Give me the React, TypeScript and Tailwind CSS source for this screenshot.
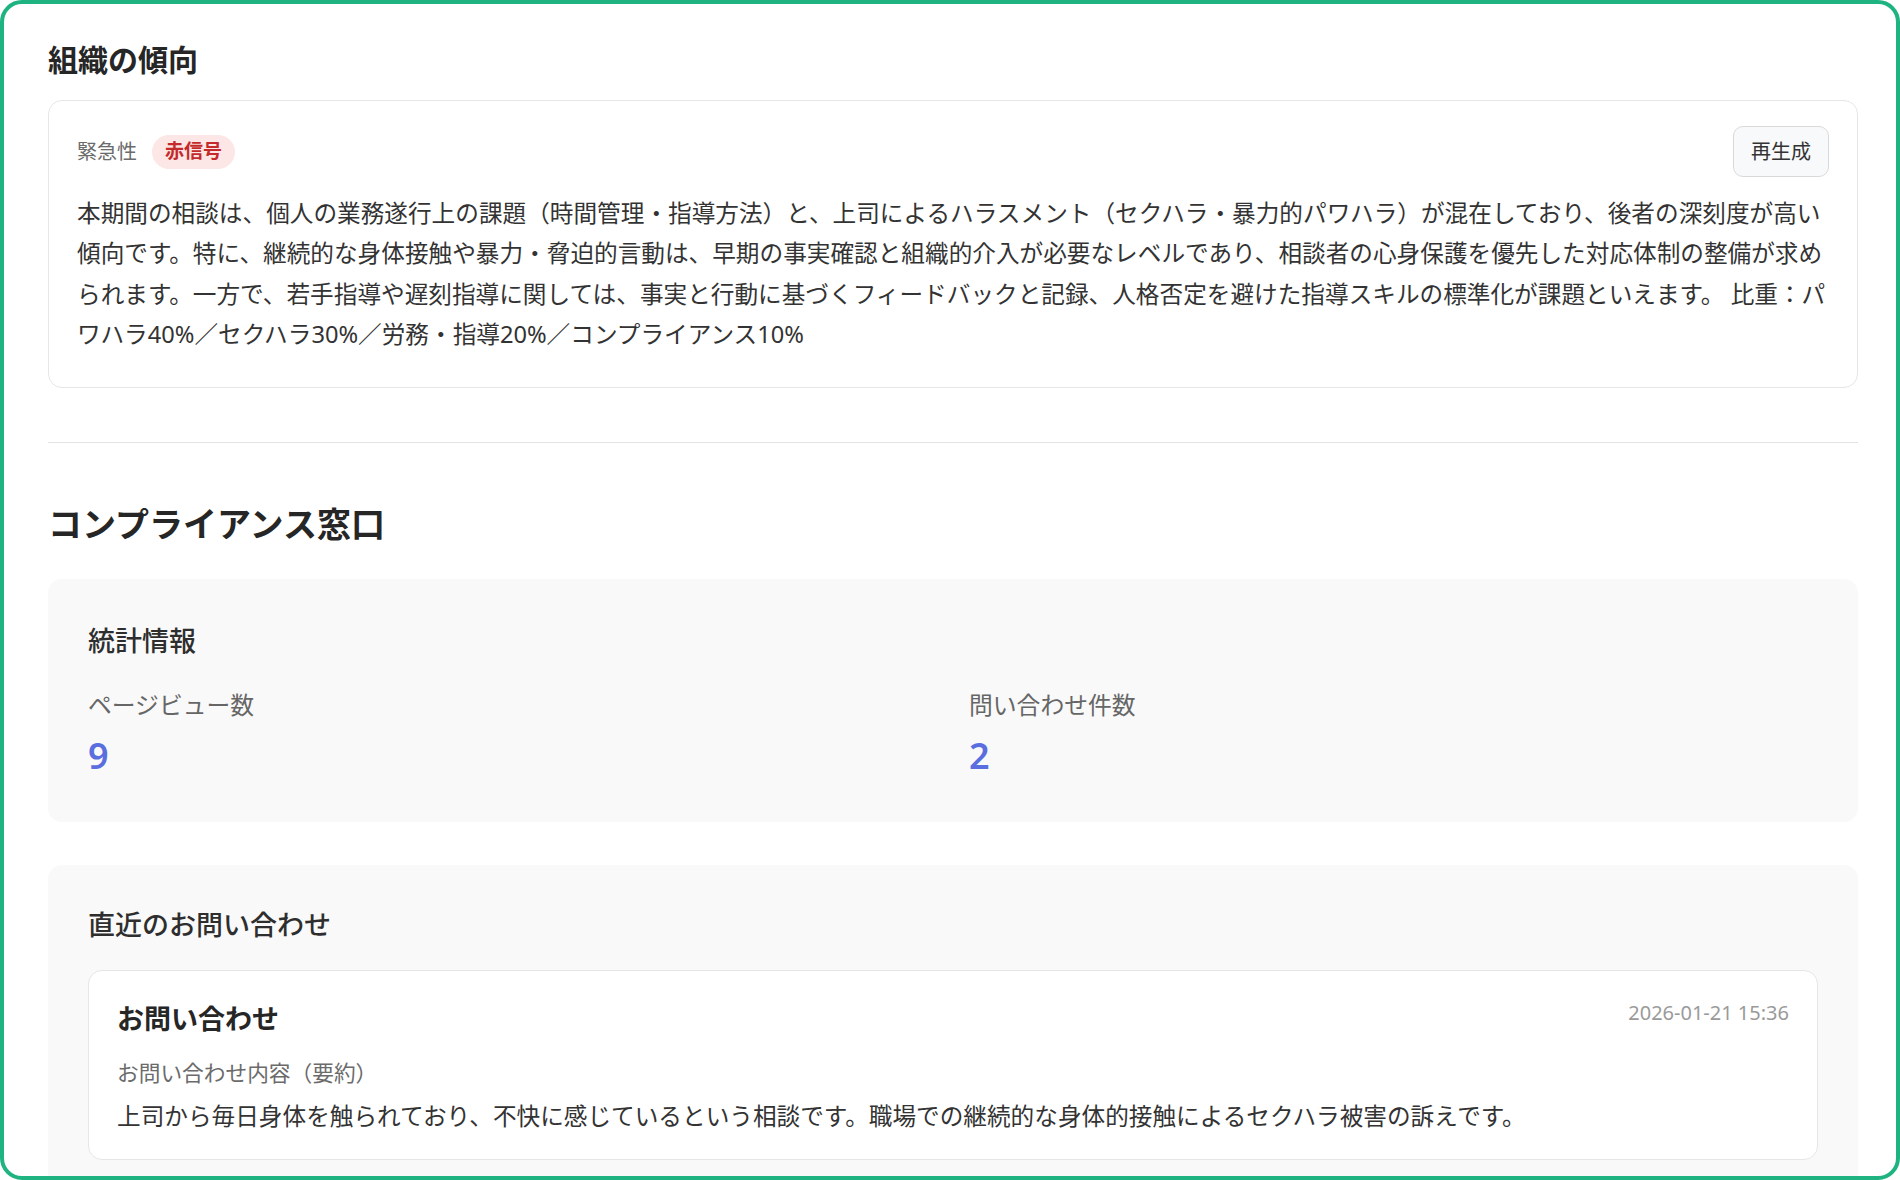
import React from "react";

const font = '"Noto Sans", "Noto Sans CJK JP", sans-serif';

const summary =
  "本期間の相談は、個人の業務遂行上の課題（時間管理・指導方法）と、上司によるハラスメント（セクハラ・暴力的パワハラ）が混在しており、後者の深刻度が高い傾向です。特に、継続的な身体接触や暴力・脅迫的言動は、早期の事実確認と組織的介入が必要なレベルであり、相談者の心身保護を優先した対応体制の整備が求められます。一方で、若手指導や遅刻指導に関しては、事実と行動に基づくフィードバックと記録、人格否定を避けた指導スキルの標準化が課題といえます。 比重：パワハラ40%／セクハラ30%／労務・指導20%／コンプライアンス10%";

const stats = [
  { label: "ページビュー数", value: 9 },
  { label: "問い合わせ件数", value: 2 },
];

const inquiries = [
  {
    id: "1",
    title: "お問い合わせ",
    date: "2026-01-21 15:36",
    body: "上司から毎日身体を触られており、不快に感じているという相談です。職場での継続的な身体的接触によるセクハラ被害の訴えです。",
  },
];

export default function App() {
  return (
    <div
      className="h-[1180px] w-[1900px] overflow-hidden rounded-[22px] border-4 border-[#1fb381] bg-white pl-[44px] pr-[38px] pt-[36px] text-[#333333]"
      style={{ fontFamily: font }}
    >
      {/* 組織の傾向 */}
      <h2 className="text-[30px] font-bold leading-[40px] text-[#262626]">
        組織の傾向
      </h2>
      <div className="mt-[20px] rounded-[14px] border border-[#e6e6e6] bg-white px-7 pb-[32px] pt-[25px]">
        <div className="flex items-center justify-between">
          <div className="flex items-center gap-[15px]">
            <span className="text-[20px] leading-[28px] text-[#6b6b6b]">
              緊急性
            </span>
            <span className="flex h-[34px] items-center rounded-full bg-[#fde6e6] px-[13px] text-[19px] font-bold text-[#c42a2a]">
              赤信号
            </span>
          </div>
          <button className="h-[51px] rounded-[10px] border border-[#d9d9d9] bg-[#f8f9fa] px-[17px] text-[20px] text-[#333333]">
            再生成
          </button>
        </div>
        <p className="-mr-2 mt-[16px] text-[23.65px] leading-[40.4px]">
          {summary}
        </p>
      </div>

      <div className="mt-[54px] h-px bg-[#e3e3e3]" />

      {/* コンプライアンス窓口 */}
      <h2 className="mt-[59px] text-[34px] font-bold leading-[44px] text-[#262626]">
        コンプライアンス窓口
      </h2>

      <div className="mt-[33px] rounded-[14px] bg-[#f9f9f9] px-10 pb-10 pt-10">
        <h3 className="text-[27px] font-medium leading-[44px] text-[#2e2e2e]">
          統計情報
        </h3>
        <div className="mt-[24px] grid grid-cols-2 gap-8">
          {stats.map((s) => (
            <div key={s.label}>
              <p className="text-[23.8px] leading-[36px] text-[#666666]">
                {s.label}
              </p>
              <p className="mt-[7px] text-[36px] font-semibold leading-[52px] text-[#5a6ee0]">
                {s.value}
              </p>
            </div>
          ))}
        </div>
      </div>

      <div className="mt-[43px] rounded-[14px] bg-[#f9f9f9] px-10 pb-10 pt-10">
        <h3 className="text-[27px] font-medium leading-[40px] text-[#2e2e2e]">
          直近のお問い合わせ
        </h3>
        <div className="mt-[25px] space-y-4">
          {inquiries.map((q) => (
            <div
              key={q.id}
              className="rounded-[14px] border border-[#e6e6e6] bg-white px-7 pb-6 pt-[29px]"
            >
              <div className="flex items-start justify-between">
                <p className="text-[27px] font-bold leading-[38px] text-[#262626]">
                  {q.title}
                </p>
                <span className="mt-[-1px] text-[20px] leading-[28px] text-[#9a9a9a]">
                  {q.date}
                </span>
              </div>
              <p className="mt-[19px] text-[21.7px] leading-[32px] text-[#6b6b6b]">
                お問い合わせ内容（要約）
              </p>
              <p className="mt-[8px] text-[23.65px] leading-[38px]">
                {q.body}
              </p>
            </div>
          ))}
        </div>
      </div>
    </div>
  );
}
